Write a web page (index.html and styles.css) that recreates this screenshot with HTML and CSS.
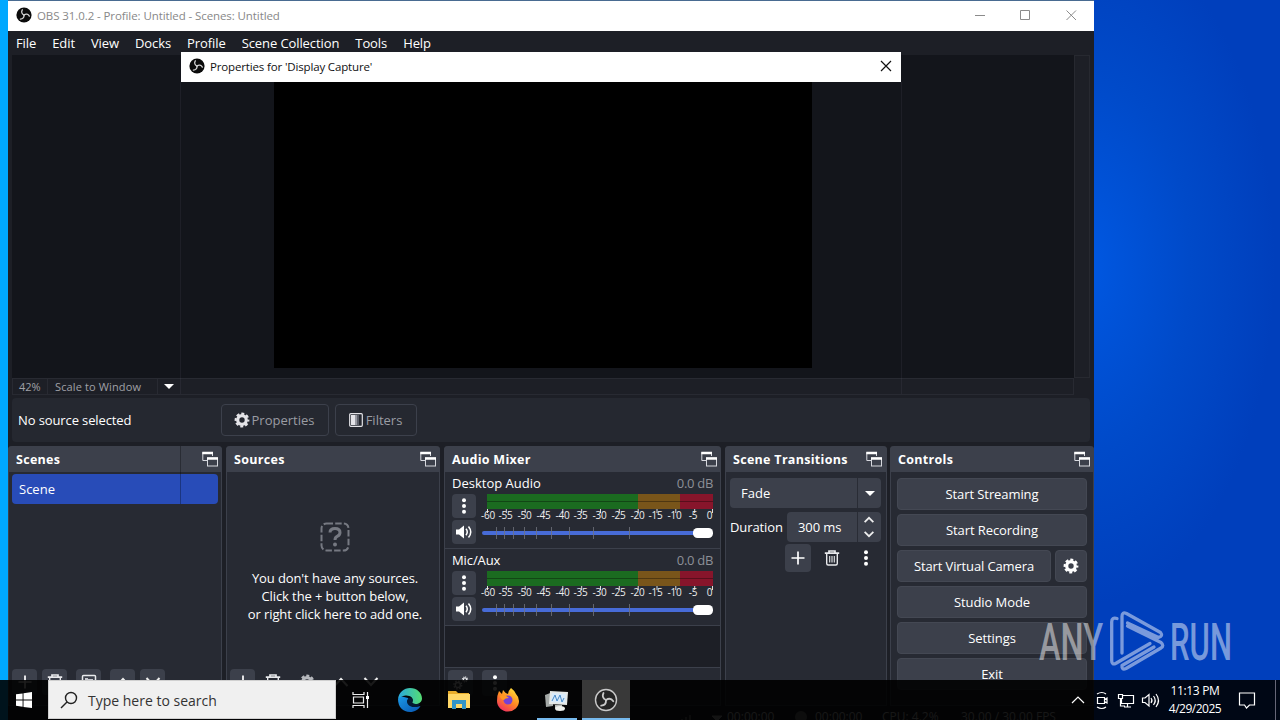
FILE: index.html
```html
<!DOCTYPE html>
<html lang="en">
<head>
<meta charset="utf-8">
<title>OBS Studio</title>
<link rel="stylesheet" href="styles.css">
</head>
<body>
<svg class="defs" aria-hidden="true">
  <defs>
    <symbol id="obs" viewBox="0 0 16 16"><circle cx="8" cy="8" r="7.6" fill="#0b0b0b"/><g fill="none" stroke="#d4d4d4" stroke-width="1.300" stroke-linecap="round"><path d="M8 8C5.8 7 5 5 6.300 2.800"/><path d="M8 8C5.800 7 5 5 6.300 2.800" transform="rotate(120 8 8)"/><path d="M8 8C5.800 7 5 5 6.300 2.800" transform="rotate(240 8 8)"/></g></symbol>
    <symbol id="gear" viewBox="0 0 16 16"><g fill="none" stroke="currentColor"><circle cx="8" cy="8" r="4.300" stroke-width="3.200"/><circle cx="8" cy="8" r="6.300" stroke-width="2.200" stroke-dasharray="2.970 1.978" stroke-dashoffset="1.480"/></g></symbol>
    <symbol id="float" viewBox="0 0 16 16"><g fill="none" stroke="#d6d8de"><path d="M5.500 9.500H.8V1.500H10.500V5"/><path d="M.3 2H11" stroke="#fff" stroke-width="2.500"/><rect x="5.500" y="7" width="10" height="8"/><path d="M5 7.500H16" stroke="#fff" stroke-width="2.500"/></g></symbol>
    <symbol id="plus" viewBox="0 0 16 16"><path d="M8 1.500V14.500M1.500 8H14.500" stroke="#fff" stroke-width="1.700"/></symbol>
    <symbol id="trash" viewBox="0 0 16 16"><g fill="none" stroke="#e8e9ec" stroke-width="1.400"><path d="M.8 3.200H15.200M5 2.800V1H11V2.800" stroke-width="1.700"/><path d="M2.700 4V13.500Q2.700 15 4.200 15H11.800Q13.300 15 13.300 13.500V4"/><path d="M5.700 6V12.500M8 6V12.500M10.300 6V12.500" stroke-width="1.100"/></g></symbol>
    <symbol id="dots" viewBox="0 0 16 16"><g fill="#fff"><circle cx="8" cy="2.300" r="2"/><circle cx="8" cy="8" r="2"/><circle cx="8" cy="13.700" r="2"/></g></symbol>
    <symbol id="speaker" viewBox="0 0 16 16"><path d="M0 5.500H3L8 1.500V14.500L3 10.500H0Z" fill="#fff"/><path d="M10 4.800Q12.500 8 10 11.200M12.500 2.500Q17 8 12.500 13.500" fill="none" stroke="#fff" stroke-width="1.500"/></symbol>
    <symbol id="up" viewBox="0 0 16 16"><path d="M3 10.500L8 5.500L13 10.500" fill="none" stroke="#eee" stroke-width="2"/></symbol>
    <symbol id="down" viewBox="0 0 16 16"><path d="M3 5.500L8 10.500L13 5.500" fill="none" stroke="#eee" stroke-width="2"/></symbol>
    <symbol id="bigup" viewBox="0 0 16 16"><path d="M1.500 12L8 5L14.500 12" fill="none" stroke="#eee" stroke-width="2"/></symbol>
    <symbol id="bigdown" viewBox="0 0 16 16"><path d="M1.500 4L8 11L14.500 4" fill="none" stroke="#eee" stroke-width="2"/></symbol>
    <symbol id="filter" viewBox="0 0 16 16"><rect x="1.700" y="1.700" width="12.600" height="12.600" rx="1" fill="none" stroke="#e4e4e8" stroke-width="1.200"/><path d="M3 3H7V13H3Z" fill="#e4e4e8"/><path d="M7 3H9V13H7Z" fill="#999ba3"/><path d="M9 3H11V13H9Z" fill="#5d606a"/></symbol>
    <symbol id="pic" viewBox="0 0 16 16"><rect x="1.500" y="1.500" width="13" height="13" rx="1" fill="none" stroke="#e8e9ec" stroke-width="1.500"/><path d="M4 4H7V7H4ZM7 5H12V7H7ZM4 8H12V12H4Z" fill="#c5c7cd"/></symbol>
    <symbol id="gears" viewBox="0 0 20 18"><g fill="none" stroke="#e8e9ec"><circle cx="6" cy="11.500" r="3.200" stroke-width="1.800"/><circle cx="6" cy="11.500" r="4.900" stroke-width="1.600" stroke-dasharray="1.920"/><circle cx="15" cy="4.500" r="2" stroke-width="1.500"/><circle cx="15" cy="4.500" r="3.200" stroke-width="1.300" stroke-dasharray="1.250"/></g></symbol>
    <symbol id="scale" viewBox="0 0 240 12"><path d="M8.500 0V4M27.300 0V4M46.200 0V4M65 0V4M83.800 0V4M102.700 0V4M121.500 0V4M140.300 0V4M159.200 0V4M178 0V4M196.800 0V4M215.700 0V4M233.500 0V4" stroke="#ddd"/></symbol>
  </defs>
</svg>
<div class="desktop">
  <main class="window">
    <header class="titlebar">
      <svg class="logo"><use href="#obs"/></svg><span class="title">OBS 31.0.2 - Profile: Untitled - Scenes: Untitled</span>
      <svg class="winbtns" viewBox="0 0 102 12"><g fill="none" stroke="#8b8b8b"><path d="M0 6.500H10M45.500 1.500H54.500V10.500H45.500ZM91.500 1.500L101 11M101 1.500L91.500 11"/></g></svg>
    </header>
    <nav class="menu"><span>File</span><span>Edit</span><span>View</span><span>Docks</span><span>Profile</span><span>Scene Collection</span><span>Tools</span><span>Help</span></nav>
    <section class="preview"><div class="canvas"></div><div class="vscroll"></div></section>
    <div class="scalebar"><span class="pct">42%</span><span class="mode">Scale to Window</span><i class="caret"></i></div>
    <div class="context"><span class="nosrc">No source selected</span>
      <div class="ghostbtn props"><svg><use href="#gear"/></svg>Properties</div>
      <div class="ghostbtn filters"><svg><use href="#filter"/></svg>Filters</div>
    </div>
    <div class="docks">
      <section class="dock scenes">
        <h2>Scenes<svg><use href="#float"/></svg></h2>
        <div class="body"><div class="scene">Scene</div></div>
        <div class="tools"><b><svg><use href="#plus"/></svg></b><b><svg><use href="#trash"/></svg></b><b class="gap"><svg><use href="#pic"/></svg></b><b class="gap"><svg><use href="#bigup"/></svg></b><b><svg><use href="#bigdown"/></svg></b></div>
      </section>
      <section class="dock sources">
        <h2>Sources<svg><use href="#float"/></svg></h2>
        <div class="body empty">
          <svg class="question" viewBox="0 0 30 30"><rect x="1.500" y="1.500" width="27" height="27" rx="5" fill="none" stroke="#767982" stroke-width="2" stroke-dasharray="6.500 2.200"/><path d="M10 10.500Q10 6.500 15 6.500T20 10.500Q20 13 17.500 14.200Q15 15.400 15 18" fill="none" stroke="#767982" stroke-width="3"/><circle cx="15" cy="22.500" r="2" fill="#767982"/></svg>
          <p>You don't have any sources.</p><p>Click the + button below,</p><p>or right click here to add one.</p>
        </div>
        <div class="tools bare"><b class="on"><svg><use href="#plus"/></svg></b><b><svg><use href="#trash"/></svg></b><b class="gap"><svg class="dim"><use href="#gear"/></svg></b><b class="gap"><svg><use href="#bigup"/></svg></b><b><svg><use href="#bigdown"/></svg></b></div>
      </section>
      <section class="dock mixer">
        <h2>Audio Mixer<svg><use href="#float"/></svg></h2>
        <div class="channel">
          <div class="chhead"><span>Desktop Audio</span><em>0.0 dB</em></div>
          <div class="chbody"><div class="chbtns"><b><svg><use href="#dots"/></svg></b><b><svg><use href="#speaker"/></svg></b></div>
            <div class="levels"><div class="meter"></div>
              <svg class="marks" viewBox="0 0 240 12"><use href="#scale" width="240" height="12"/><g><text x="9" y="10">-60</text><text x="26.500" y="10">-55</text><text x="45.500" y="10">-50</text><text x="64.500" y="10">-45</text><text x="83.500" y="10">-40</text><text x="101.500" y="10">-35</text><text x="120.500" y="10">-30</text><text x="139.500" y="10">-25</text><text x="158.500" y="10">-20</text><text x="176.500" y="10">-15</text><text x="195.500" y="10">-10</text><text x="214" y="10">-5</text><text x="230.500" y="10">0</text></g></svg>
              <svg class="slider" viewBox="0 0 232 14"><rect y="5" width="215" height="4" rx="2" fill="#476bd7"/><path d="M14.500 1V13M22.500 1V13M31.500 1V13M42.500 1V13M54.500 1V13M69.500 1V13M87.500 1V13M111.500 1V13M147.500 1V13" stroke="#70737d" stroke-opacity=".8"/><rect x="211" y="2" width="20" height="10" rx="4.500" fill="#fff"/></svg>
            </div></div>
        </div>
        <div class="channel">
          <div class="chhead"><span class="mic">Mic/Aux</span><em>0.0 dB</em></div>
          <div class="chbody"><div class="chbtns"><b><svg><use href="#dots"/></svg></b><b><svg><use href="#speaker"/></svg></b></div>
            <div class="levels"><div class="meter"></div>
              <svg class="marks" viewBox="0 0 240 12"><use href="#scale" width="240" height="12"/><g><text x="9" y="10">-60</text><text x="26.500" y="10">-55</text><text x="45.500" y="10">-50</text><text x="64.500" y="10">-45</text><text x="83.500" y="10">-40</text><text x="101.500" y="10">-35</text><text x="120.500" y="10">-30</text><text x="139.500" y="10">-25</text><text x="158.500" y="10">-20</text><text x="176.500" y="10">-15</text><text x="195.500" y="10">-10</text><text x="214" y="10">-5</text><text x="230.500" y="10">0</text></g></svg>
              <svg class="slider" viewBox="0 0 232 14"><rect y="5" width="215" height="4" rx="2" fill="#476bd7"/><path d="M14.500 1V13M22.500 1V13M31.500 1V13M42.500 1V13M54.500 1V13M69.500 1V13M87.500 1V13M111.500 1V13M147.500 1V13" stroke="#70737d" stroke-opacity=".8"/><rect x="211" y="2" width="20" height="10" rx="4.500" fill="#fff"/></svg>
            </div></div>
        </div>
        <div class="void"></div>
        <div class="tools"><b><svg><use href="#gears"/></svg></b><b class="gap"><svg><use href="#dots"/></svg></b></div>
      </section>
      <section class="dock transitions">
        <h2>Scene Transitions<svg><use href="#float"/></svg></h2>
        <div class="select"><span>Fade</span><div class="arrow"><i class="caret"></i></div></div>
        <div class="duration"><label>Duration</label><div class="spin"><span>300 ms</span><div class="steps"><svg><use href="#up"/></svg><svg><use href="#down"/></svg></div></div></div>
        <div class="trbtns"><b class="on"><svg><use href="#plus"/></svg></b><b><svg><use href="#trash"/></svg></b><b><svg><use href="#dots"/></svg></b></div>
      </section>
      <section class="dock controls">
        <h2>Controls<svg><use href="#float"/></svg></h2>
        <div class="buttons">
          <button>Start Streaming</button><button>Start Recording</button>
          <div class="pair"><button class="camera">Start Virtual Camera</button><button class="cog"><svg><use href="#gear"/></svg></button></div>
          <button>Studio Mode</button><button>Settings</button><button>Exit</button>
        </div>
      </section>
    </div>
    <footer class="status"><svg viewBox="0 0 50 12"><path d="M5 12V8M9 12V6M13 12V4M35 5L45 5L40 10Z" fill="#aaa" stroke="#aaa"/></svg><span class="time">00:00:00</span><i></i><span class="time">00:00:00</span><span class="cpu">CPU: 4.2%</span><span>30.00 / 30.00 FPS</span></footer>
  </main>

  <div class="seam seam-top"></div><div class="seam seam-low"></div>
  <div class="dialog"><svg class="logo"><use href="#obs"/></svg><span>Properties for 'Display Capture'</span><svg class="close" viewBox="0 0 12 12"><path d="M1 1L11 11M11 1L1 11" stroke="#111" stroke-width="1.200"/></svg></div>

  <svg class="watermark" viewBox="0 0 200 70">
    <g fill="#fff" fill-opacity=".48"><text x="4" y="54" textLength="64" lengthAdjust="spacingAndGlyphs">ANY</text><text x="135" y="54" textLength="62" lengthAdjust="spacingAndGlyphs">RUN</text></g>
    <path d="M82 12.500Q76.700 11 76.700 16V54.500Q76.700 59.500 81 57.300L115 37.500M87 47V10.500Q87 5.500 91.500 7.500L125.500 26.500Q128.500 30 123.500 31.500L92.500 17M92.500 20L126 36.500Q129.500 39.500 126 42L91 62.500Q86.500 64.500 87 59.500L119 41" fill="none" stroke="#fff" stroke-opacity=".48" stroke-width="3.300" stroke-linejoin="round" stroke-linecap="round"/>
  </svg>

  <footer class="taskbar">
    <div class="start"><svg viewBox="0 0 16 16"><path d="M0 2.300L6.600 1.400V7.600H0ZM7.500 1.200L16 0V7.600H7.500ZM0 8.500H6.600V14.700L0 13.800ZM7.500 8.500H16V16L7.500 14.900Z" fill="#fff"/></svg></div>
    <div class="search"><svg viewBox="0 0 18 18"><circle cx="11" cy="7" r="5.500" fill="none" stroke="#222" stroke-width="1.400"/><path d="M7 11L1 17" stroke="#222" stroke-width="1.400"/></svg><span>Type here to search</span></div>
    <div class="apps">
      <div class="app"><svg viewBox="0 0 24 24"><g fill="none" stroke="#eee" stroke-width="1.200"><path d="M4 4V6.500H15V4M4 20V17.500H15V20M4.500 9H14.500V15H4.500ZM18.500 4V20"/></g><path d="M17 8H20V11H17Z" fill="#fff"/></svg></div>
      <div class="app"><svg viewBox="0 0 24 24"><defs><linearGradient id="ea" x2="1"><stop stop-color="#28a9e0"/><stop offset="1" stop-color="#55dd72"/></linearGradient><linearGradient id="eb" x2="1" y2="1"><stop stop-color="#1b9ae8"/><stop offset="1" stop-color="#0855b0"/></linearGradient></defs><path d="M0 11C0 19 5 24 12 24C17 24 20.500 21.500 22.500 18Q17 20 14 17L10 10L2 8Z" fill="url(#eb)"/><path d="M0 11C1 4 6 0 12 0C19 0 24 5 24 10.500C24 14 21 16 17.500 16C15 16 13.500 15 14.500 13.500C16 10 12 7 7.500 7.500C4 8 1 9.500 0 11Z" fill="url(#ea)"/><path d="M14.500 13.500C13.500 15 15 16 17.500 16Q20 16 22.500 15.500Q20 19.500 16 19C12 19 8.500 16.500 9 12.500Q9.500 10 12.500 9.500Q15.500 11 14.500 13.500Z" fill="#041a33"/></svg></div>
      <div class="app"><svg viewBox="0 0 24 24"><path d="M1 3H9L11 5H22V20H1Z" fill="#e9ad2c"/><path d="M1 6H23V20H1Z" fill="#ffd768"/><path d="M5 12H19V21H15V16H9V21H5Z" fill="#3294c8"/></svg></div>
      <div class="app"><svg viewBox="0 0 24 24"><defs><linearGradient id="ff" x1=".8" x2=".2" y2="1"><stop stop-color="#ffe23c"/><stop offset=".5" stop-color="#ff8a22"/><stop offset="1" stop-color="#f02965"/></linearGradient></defs><path d="M15 0Q19 3 20 6Q23 9 23 13A11 10.500 0 0 1 1 13Q1 7 3 3L6 6L7 2Q9 5 12 6Q12 3 15 0Z" fill="url(#ff)"/><circle cx="12" cy="12" r="4.500" fill="#7540d5"/><path d="M4 8Q9 6 13 10Q9 10 8 12Q5 12 4 8Z" fill="#ff9922"/></svg></div>
      <div class="app running"><svg viewBox="0 0 24 24"><path d="M0 7L8 4V18L1 19Z" fill="#a4a9a7"/><path d="M5 3L23 4L22 17L4 16Z" fill="#e5e8e6"/><path d="M7 5L21 6L20 15L6 14Z" fill="#d8eafa"/><path d="M7 13L10 7L12 13L15 7L17 14L19 10" fill="none" stroke="#498bc8"/><path d="M10 17H17V20H10Z" fill="#b9bcb9"/><ellipse cx="15" cy="20.500" rx="5" ry="2.500" fill="#eceeea"/></svg></div>
      <div class="app active"><svg viewBox="0 0 24 24"><circle cx="12" cy="12" r="10.500" fill="#242424" stroke="#c8c8c8" stroke-width="1.400"/><g fill="none" stroke="#c8c8c8" stroke-width="1.800" stroke-linecap="round"><path d="M12 12C9 10.500 8 8 9.500 5"/><path d="M12 12C9 10.500 8 8 9.500 5" transform="rotate(120 12 12)"/><path d="M12 12C9 10.500 8 8 9.500 5" transform="rotate(240 12 12)"/></g></svg></div>
    </div>
    <div class="tray">
      <svg viewBox="0 0 96 20"><g fill="none" stroke="#fff" stroke-width="1.200"><path d="M2 13L8 7L14 13"/><path d="M27.500 7.500H34.500V13.500H27.500ZM34.500 9.500L37 8V13L34.500 11.500M27 4Q32 1 36 4M27 17Q32 20 36 17"/><path d="M53 5.500H63.500V13.500H51.500V9M48.500 4.500H52.500V8.500H48.500ZM50.500 8.500V16H55M57.500 13.500V17M54 17H61"/><path d="M72.500 8H75L79 4.500V16L75 12.500H72.500ZM81 8Q83 10.500 81 13M83.500 6Q87 10.500 83.500 15M86 4Q91 10.500 86 17"/></g></svg>
      <div class="clock"><span class="hour">11:13 PM</span><span>4/29/2025</span></div>
      <svg class="note" viewBox="0 0 18 18"><path d="M1.500 2H16.500V14H11.500L8.500 17L6.500 14H1.500Z" fill="none" stroke="#fff" stroke-width="1.200"/></svg>
    </div>
  </footer>
</div>
</body>
</html>
```
FILE: styles.css
```css
* { box-sizing: border-box; }
body { margin: 0; font-family: "Open Sans", "Noto Sans", sans-serif; font-size: 13px; color: #fff; }
.defs { position: absolute; width: 0; height: 0; }
.desktop { position: relative; width: 1280px; height: 720px; overflow: hidden; background: linear-gradient(90deg, #00a8ff 8px, transparent 8px), radial-gradient(ellipse 190px 340px at 1085px 265px, #0058e2, #004ac9 55%, #003fbc 100%); }
.window { margin-left: 8px; width: 1086px; height: 728px; background: #1d1f26; display: flex; flex-direction: column; }
.titlebar { height: 31px; flex: none; border-top: 1px solid #496b91; background: #fff; display: flex; align-items: center; padding: 0 17px 2px 8px; color: #888; }
.logo { width: 16px; height: 16px; margin-right: 5px; flex: none; }
.title { white-space: nowrap; font-size: 11.5px; letter-spacing: -.09px; }
.winbtns { width: 102px; height: 12px; margin-left: auto; }
.menu { height: 24px; flex: none; display: flex; gap: 16px; padding-left: 8px; line-height: 25px; letter-spacing: -.09px; }
.preview { height: 323px; flex: none; display: flex; margin: 0 4px; background: #13151b; }
.canvas { margin: 0 262px 10px 262px; width: 538px; background: #000; }
.vscroll { width: 16px; border: 1px solid #272930; background: #1d1f26; }
.scalebar { height: 17px; flex: none; margin: 0 20px 0 4px; border: 1px solid #282a32; display: flex; align-items: center; font-size: 11px; color: #a0a1a6; }
.pct { width: 35px; padding-left: 6px; border-right: 1px solid #282a32; }
.mode { width: 110px; padding-left: 7px; border-right: 1px solid #282a32; white-space: nowrap; letter-spacing: .13px; }
.caret { width: 0; height: 0; border: 5px solid transparent; border-top-color: #fff; border-bottom: 0; margin-left: 6px; }
.context { height: 44px; flex: none; margin: 3px 4px 4px; background: #252830; border-radius: 4px; display: flex; align-items: center; }
.nosrc { width: 209px; padding-left: 6px; letter-spacing: -.11px; }
.ghostbtn { height: 32px; border: 1px solid #3c404b; border-radius: 4px; display: flex; align-items: center; justify-content: center; gap: 2px; color: #9a9ca3; margin-right: 6px; padding-right: 2px; }
.ghostbtn svg { width: 16px; height: 16px; color: #e4e4e8; }
.props { width: 108px; }
.filters { width: 82px; }
.docks { height: 260px; flex: none; display: flex; }
.dock { background: #272a33; border: 1px solid #3c404b; border-top: 0; border-radius: 4px 4px 0 0; display: flex; flex-direction: column; flex: none; }
.dock h2 { margin: 0 -1px; height: 26px; flex: none; background: #3c404b; border-radius: 4px 4px 0 0; display: flex; align-items: center; justify-content: space-between; padding: 0 4px 0 8px; font-size: 12.500px; font-weight: 700; line-height: 24px; padding-top: 2px; letter-spacing: .3px; }
.dock h2 svg { width: 16px; height: 16px; margin-top: -2px; }
.scenes, .sources { width: 214px; margin-right: 4px; }
.mixer { width: 277px; margin-right: 4px; }
.transitions { width: 162px; margin-right: 3px; }
.transitions h2 { padding-right: 5px; }
.controls { width: 204px; }
.body { height: 197px; }
.scene { height: 30px; margin: 2px 3px 0; background: #284cb8; border-radius: 4px; padding-left: 7px; line-height: 31px; }
.empty { display: flex; flex-direction: column; align-items: center; padding: 50px 0 0 4px; line-height: 18px; letter-spacing: -.1px; }
.empty p { margin: 0; }
.question { width: 30px; height: 30px; margin-bottom: 17px; }
.tools { display: flex; padding-left: 3px; gap: 5px; }
.tools b { width: 25px; height: 26px; background: #3c404b; border-radius: 4px; display: flex; align-items: center; justify-content: center; }
.tools svg { width: 16px; height: 16px; }
.tools .gap { margin-left: 4px; }
.bare b { background: none; }
.bare .on { background: #3c404b; }
.dim { color: #b6b8bd; }
.channel { height: 77px; border-bottom: 1px solid #3c404b; flex: none; }
.chhead { height: 22px; display: flex; justify-content: space-between; padding: 0 7px; line-height: 23px; }
.chhead em { font-style: normal; color: #8d9098; letter-spacing: -.3px; }
.chhead .mic { letter-spacing: -.1px; }
.chbody { display: flex; padding-left: 7px; }
.chbtns { width: 24px; display: flex; flex-direction: column; gap: 2px; }
.chbtns b { height: 24px; background: #3c404b; border-radius: 4px; display: flex; align-items: center; justify-content: center; }
.chbtns svg { width: 16px; height: 16px; }
.levels { width: 240px; margin-left: 3px; display: flex; flex-direction: column; }
.meter { width: 226px; height: 15px; margin-left: 8px; background: linear-gradient(transparent 7px, rgba(0,0,0,.35) 7px, rgba(0,0,0,.35) 8px, transparent 8px), linear-gradient(90deg, #1b6b20 151px, #79551a 151px, #79551a 193px, #87152b 193px); }
.marks { width: 240px; height: 12px; font-size: 10px; overflow: visible; }
.marks text { text-anchor: middle; fill: #eee; letter-spacing: -.3px; }
.slider { width: 232px; height: 14px; margin: 5px 0 0 3px; }
.void { height: 42px; flex: none; background: #1d1f26; border-bottom: 1px solid #3c404b; margin-bottom: 2px; }
.select { display: flex; height: 30px; margin: 6px 5px 4px 4px; background: #3c404b; border-radius: 4px; line-height: 30px; flex: none; }
.select span { width: 128px; padding-left: 11px; border-right: 1px solid #292c35; }
.arrow { display: flex; align-items: center; }
.arrow .caret { margin-left: 7px; }
.duration { display: flex; height: 30px; justify-content: space-between; margin: 0 5px 0 4px; line-height: 30px; letter-spacing: -.1px; }
.spin { display: flex; width: 94px; background: #3c404b; border-radius: 4px; }
.spin span { width: 71px; padding-left: 11px; border-right: 1px solid #292c35; }
.steps { display: flex; flex-direction: column; padding: 1px 0 0 4px; }
.steps svg { width: 14px; height: 14px; }
.trbtns { display: flex; margin: 2px 0 0 59px; gap: 8px; }
.trbtns b { width: 26px; height: 28px; display: flex; align-items: center; justify-content: center; border-radius: 4px; }
.trbtns .on { background: #3c404b; }
.trbtns svg { width: 16px; height: 16px; }
.buttons { display: flex; flex-direction: column; gap: 4px; padding: 6px 6px 0; }
button { height: 32px; width: 190px; flex: none; border: 1px solid #444853; border-radius: 4px; background: #3c404b; color: #fff; font: inherit; letter-spacing: -.09px; padding: 0; display: flex; align-items: center; justify-content: center; }
.pair { display: flex; gap: 4px; }
.pair .camera { width: 154px; letter-spacing: -.12px; }
.pair .cog { width: 32px; }
.cog svg { width: 16px; height: 16px; }
.status { display: flex; height: 22px; flex: none; line-height: 22px; align-items: center; padding-left: 669px; color: #ccc; font-size: 12px; }
.status svg { width: 50px; height: 12px; flex: none; }
.status span { white-space: nowrap; flex: none; }
.status i { width: 12px; height: 12px; background: #777; border-radius: 50%; margin: 0 8px 0 18px; }
.time { width: 50px; }
.status .cpu { margin-left: 17px; width: 79px; }
.seam { position: absolute; left: 180px; width: 722px; border: solid; border-width: 0 1px; }
.seam-top { top: 82px; height: 312px; border-color: rgba(130,130,150,.1); }
.seam-low { top: 446px; height: 58px; border-color: transparent transparent transparent rgba(0,0,0,.3); }
.dialog { position: absolute; left: 181px; top: 52px; width: 720px; height: 30px; background: #fff; display: flex; align-items: center; padding: 0 9px 2px 8px; color: #111; font-size: 11.5px; letter-spacing: -.15px; }
.close { width: 12px; height: 12px; margin-left: auto; }
.watermark { position: absolute; left: 1035px; top: 606px; width: 200px; height: 70px; font-family: Roboto, sans-serif; font-size: 52px; font-weight: 500; }
.taskbar { position: absolute; left: 0; top: 680px; width: 1280px; height: 40px; background: rgba(0,0,0,.89); display: flex; }
.start { width: 48px; padding: 12px 0 0 16px; flex: none; }
.start svg { width: 16px; height: 16px; }
.search { width: 288px; height: 39px; background: #f0f0f0; border: 1px solid #d0d0d0; color: #333; font-size: 14px; display: flex; align-items: center; flex: none; padding: 1px 0 0 11px; }
.search svg { width: 18px; height: 18px; margin-right: 10px; }
.apps { display: flex; gap: 1px; }
.app { width: 48px; height: 40px; display: flex; align-items: center; justify-content: center; }
.app svg { width: 24px; height: 24px; }
.apps { margin-left: 1px; }
.running { background: linear-gradient(#76b9ed, #76b9ed) 50% 100% / 40px 2px no-repeat; }
.active { background: linear-gradient(#76b9ed, #76b9ed) 50% 100% / 48px 2px no-repeat, #393939; }
.tray { margin-left: auto; display: flex; align-items: center; border-right: 1px solid #667; margin-right: 4px; padding-right: 19px; }
.tray svg { width: 96px; height: 20px; }
.clock { width: 66px; display: flex; flex-direction: column; align-items: center; font-size: 12px; line-height: 18px; margin: 0 10px 0 -4px; letter-spacing: -.5px; }
.clock .hour { letter-spacing: -.35px; }
.tray .note { width: 18px; height: 18px; }
```
